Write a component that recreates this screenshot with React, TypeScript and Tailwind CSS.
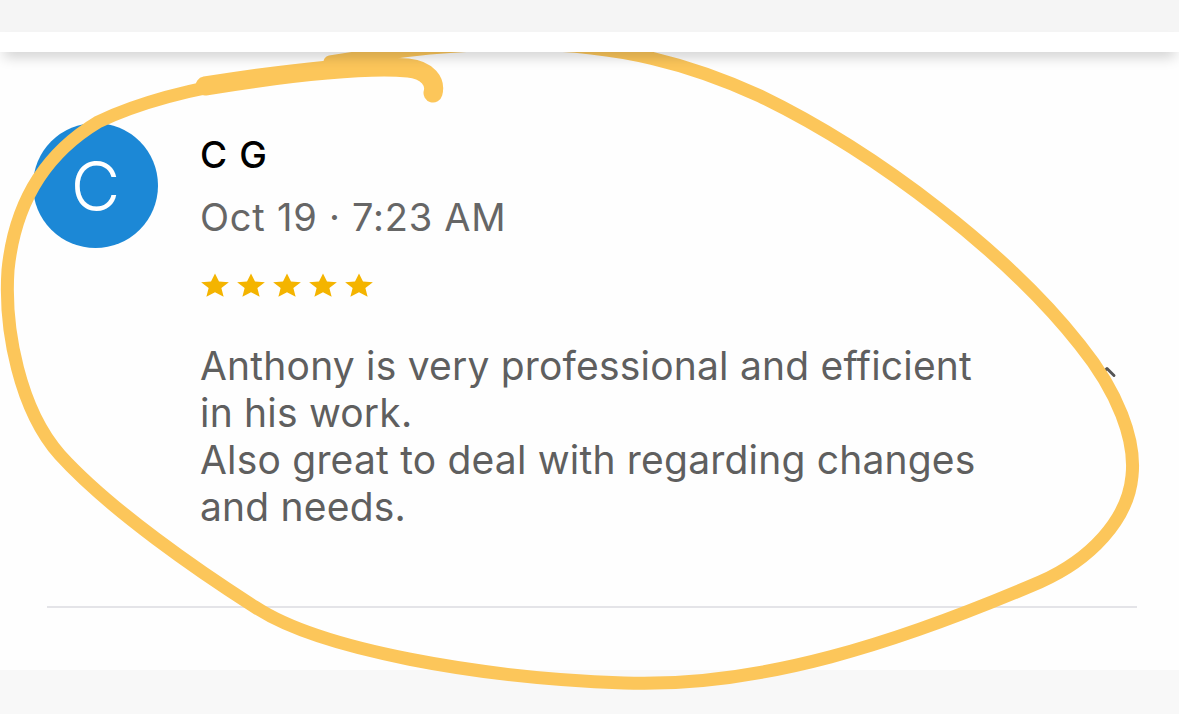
import { ChevronUp } from "lucide-react";

const review = {
  initial: "C",
  name: "C G",
  when: "Oct 19 · 7:23 AM",
  rating: 5,
  lines: [
    "Anthony is very professional and efficient",
    "in his work.",
    "Also great to deal with regarding changes",
    "and needs.",
  ],
};

function Star() {
  return (
    <svg width="30" height="25" viewBox="0 0 24 23" preserveAspectRatio="none" className="shrink-0">
      <path
        fill="#f4b400"
        d="M12 0.5l3.2 7.4 7.9.7-6 5.3 1.8 7.9L12 17.6l-6.9 4.2 1.8-7.9-6-5.3 7.9-.7z"
      />
    </svg>
  );
}

// hand drawn highlight that sits on top of the screenshot
function Scribble() {
  return (
    <svg
      className="absolute inset-0 pointer-events-none"
      width="1179"
      height="714"
      viewBox="0 0 1179 714"
      fill="none"
    >
      <path
        d="M330 62 C400 50 460 43 526 44 C620 45 690 64 760 96 C880 154 1010 256 1080 345 C1118 392 1136 440 1132 476 C1128 520 1090 560 1040 582 C900 642 760 688 624 683 C480 678 320 650 255 607 C200 572 110 510 60 455 C20 410 4 330 8 270 C15 200 48 152 98 122 C165 90 260 76 340 70"
        stroke="#fcc65a"
        strokeWidth="13"
        strokeLinecap="round"
      />
      <path
        d="M205 86 C280 74 360 64 408 68 C428 70 436 82 433 93"
        stroke="#fcc65a"
        strokeWidth="19"
        strokeLinecap="round"
      />
    </svg>
  );
}

export default function App() {
  return (
    <div className="relative w-[1179px] h-[714px] overflow-hidden bg-[#f8f8f8] font-['Inter',sans-serif]">
      <div className="h-8 bg-[#f5f5f5]" />
      <div className="relative z-10 h-5 bg-white shadow-[0_8px_14px_-4px_rgba(0,0,0,0.22)]" />

      <div className="bg-[#fefefe] h-[618px] flex flex-col">
        <div className="flex pl-[33px] pr-[62px] pt-[71px]">
          <div className="w-[125px] h-[125px] rounded-full bg-[#1c88d6] flex items-center justify-center shrink-0">
            <span className="text-white text-[68px] font-light leading-none">{review.initial}</span>
          </div>

          <div className="flex-1 pl-[42px] pt-3">
            <div className="text-[37px] leading-[40px] font-medium text-black tracking-[0.03em]">
              {review.name}
            </div>
            <div className="mt-5 text-[38px] leading-[44px] text-[#666666] tracking-[0.02em]">
              {review.when}
            </div>
            <div className="mt-[34px] flex gap-1.5">
              {Array.from({ length: review.rating }).map((_, i) => (
                <Star key={i} />
              ))}
            </div>
            <div className="mt-[44px] text-[39px] leading-[47px] text-[#5f5f5f] tracking-[0.005em]">
              {review.lines.map((l) => (
                <div key={l}>{l}</div>
              ))}
            </div>
          </div>

          <div className="w-6 pt-[235px]">
            <ChevronUp size={28} strokeWidth={2.5} className="text-[#555]" />
          </div>
        </div>

        <div className="mt-auto mb-[62px] ml-[47px] mr-[42px] h-[2px] bg-[#e4e4e8]" />
      </div>

      <Scribble />
    </div>
  );
}
